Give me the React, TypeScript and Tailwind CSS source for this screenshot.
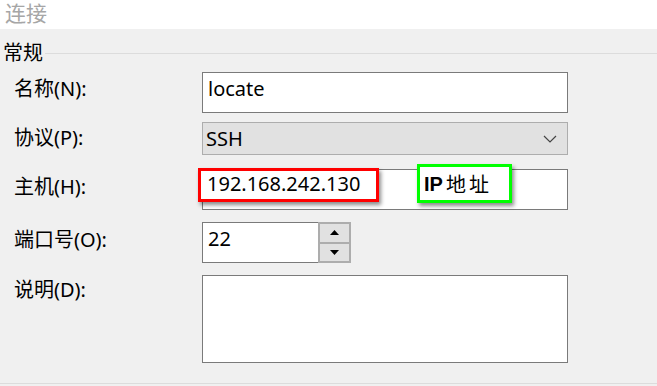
import React from "react";

const font = { fontFamily: '"Noto Sans", "Noto Sans CJK SC", sans-serif' };

function Label({ children, className = "" }: { children: React.ReactNode; className?: string }) {
  return (
    <div className={`w-[202px] shrink-0 pl-[14px] text-[20px] leading-none text-black ${className}`}>{children}</div>
  );
}

export default function App() {
  return (
    <div
      className="w-[657px] h-[386px] bg-[#f0f0f0] overflow-hidden flex flex-col"
      style={font}
    >
      <div className="h-[29px] bg-white flex items-start pt-[3px] pl-[5px] text-[21px] text-[#a6a6a6] leading-none">
        连接
      </div>
      <div className="h-[24px] mt-[12px] flex items-center">
        <span className="pl-[3px] text-[20px] leading-none text-black">常规</span>
        <div className="flex-1 h-px bg-[#dcdcdc] ml-[2px]" />
      </div>

      <div className="mt-[7px] h-[41px] flex items-center">
        <Label className="pb-[8px]">名称(N):</Label>
        <div className="w-[366px] h-full bg-white border border-[#7a7a7a] flex items-center pl-[5px] pb-[8px] text-[20px] text-black">
          locate
        </div>
      </div>

      <div className="mt-[9px] h-[33px] flex items-center">
        <Label className="pb-[2px]">协议(P):</Label>
        <div className="w-[366px] h-full bg-[#e1e1e1] border border-[#adadad] flex items-center justify-between pl-[3px] pr-[10px] text-[20px] text-black">
          <span>SSH</span>
          <svg width="14" height="8" viewBox="0 0 14 8">
            <polyline points="1,1 7,7 13,1" fill="none" stroke="#444" strokeWidth="1.2" />
          </svg>
        </div>
      </div>

      <div className="mt-[14px] h-[41px] flex items-center">
        <Label className="pb-[6px]">主机(H):</Label>
        <div className="relative w-[366px] h-full bg-white border border-[#7a7a7a]">
          <div className="absolute left-[-5px] top-[-2px] w-[181px] h-[34px] bg-white border-[3px] border-[#ff0000] shadow-[2px_3px_4px_rgba(0,0,0,0.45)] flex items-center pl-[6px] pb-[2px] text-[20px] text-black">
            192.168.242.130
          </div>
          <div className="absolute left-[214px] top-[-6px] w-[95px] h-[39px] bg-white border-[3px] border-[#00ff00] shadow-[2px_3px_4px_rgba(0,0,0,0.45)] flex items-center pl-[4px] text-[20px] text-black">
            <span className="font-bold" style={{ fontFamily: '"Liberation Sans", sans-serif' }}>IP</span>
            <span className="ml-[3px] tracking-[3px]" style={{ fontFamily: '"Noto Sans CJK SC", sans-serif' }}>地址</span>
          </div>
        </div>
      </div>

      <div className="mt-[12px] h-[41px] flex items-center">
        <Label className="pb-[6px]">端口号(O):</Label>
        <div className="h-full flex">
          <div className="w-[116px] h-full bg-white border border-[#7a7a7a] border-r-0 flex items-center pl-[5px] pb-[7px] text-[20px] text-black">
            22
          </div>
          <div className="w-[33px] h-full flex flex-col border border-[#adadad] bg-[#f0f0f0]">
            <div className="flex-1 bg-[#e1e1e1] border border-[#adadad] flex items-center justify-center">
              <svg width="9" height="5" viewBox="0 0 9 5"><polygon points="0,5 4.5,0 9,5" fill="#000" /></svg>
            </div>
            <div className="flex-1 bg-[#e1e1e1] border border-[#adadad] flex items-center justify-center">
              <svg width="9" height="5" viewBox="0 0 9 5"><polygon points="0,0 4.5,5 9,0" fill="#000" /></svg>
            </div>
          </div>
        </div>
      </div>

      <div className="mt-[12px] h-[88px] flex items-start">
        <div className="pt-[5px]">
          <Label>说明(D):</Label>
        </div>
        <div className="w-[366px] h-full bg-white border border-[#7a7a7a]" />
      </div>

      <div className="mt-[20px] h-px bg-[#dcdcdc]" />
    </div>
  );
}
